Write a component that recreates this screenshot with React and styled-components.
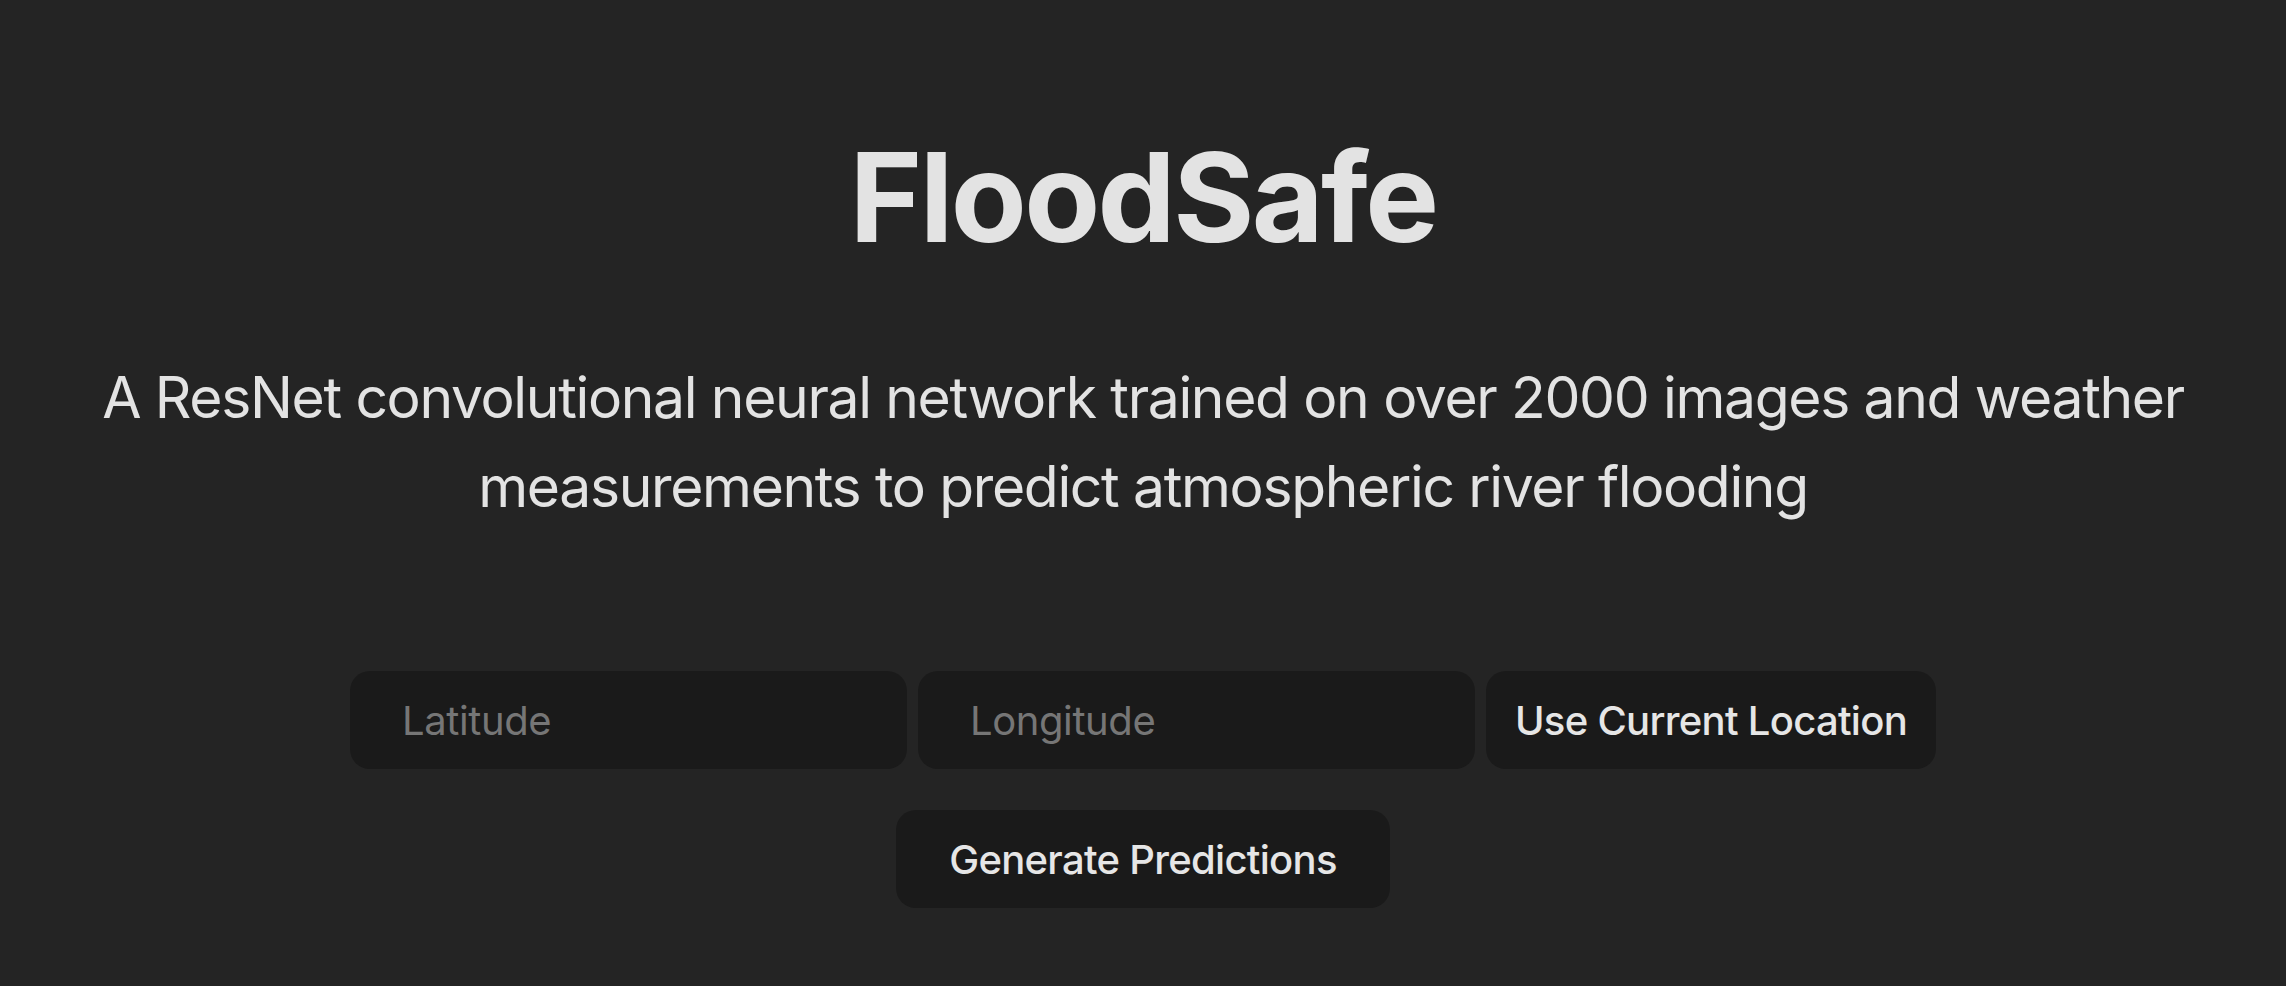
import React, { useState } from "react";
import styled, { createGlobalStyle } from "styled-components";

const GlobalStyle = createGlobalStyle`
  html, body {
    margin: 0;
    padding: 0;
    background: #242424;
  }
  body {
    font-family: Inter, "Noto Sans", "Liberation Sans", sans-serif;
    color: rgba(255, 255, 255, 0.87);
    -webkit-font-smoothing: antialiased;
  }
`;

const Page = styled.main`
  min-height: 100vh;
  box-sizing: border-box;
  display: flex;
  flex-direction: column;
  align-items: center;
  padding-top: 129px;
`;

const Title = styled.h1`
  margin: 0;
  font-size: 124px;
  font-weight: 700;
  line-height: 137px;
  letter-spacing: -2.6px;
  color: #e3e3e3;
`;

const Tagline = styled.p`
  margin: 87px 0 0;
  max-width: 2140px;
  font-size: 57px;
  font-weight: 400;
  line-height: 89px;
  letter-spacing: -1.35px;
  text-align: center;
  color: #e3e3e3;
`;

const Form = styled.form`
  margin-top: 140px;
  display: flex;
  flex-direction: column;
  align-items: center;
  gap: 41px;
`;

const Row = styled.div`
  display: flex;
  gap: 11px;
`;

const CoordInput = styled.input`
  box-sizing: border-box;
  width: 557px;
  height: 98px;
  padding: 0 52px;
  border: none;
  border-radius: 20px;
  background: #1a1a1a;
  color: #e3e3e3;
  font-family: inherit;
  font-size: 40px;
  letter-spacing: -0.4px;
  outline: none;

  &::placeholder {
    color: #767676;
  }
`;

const ActionButton = styled.button`
  box-sizing: border-box;
  height: 98px;
  padding: 0 ${({ $padX }) => $padX}px;
  border: 1px solid transparent;
  border-radius: 20px;
  background: #1a1a1a;
  color: #e6e6e6;
  font-family: inherit;
  font-size: 40px;
  font-weight: 500;
  letter-spacing: -0.7px;
  cursor: pointer;
`;

export default function App() {
  const [lat, setLat] = useState("");
  const [lng, setLng] = useState("");

  return (
    <>
      <GlobalStyle />
      <Page>
        <Title>FloodSafe</Title>
        <Tagline>
          A ResNet convolutional neural network trained on over 2000 images and
          weather measurements to predict atmospheric river flooding
        </Tagline>
        <Form onSubmit={(e) => e.preventDefault()}>
          <Row>
            <CoordInput
              placeholder="Latitude"
              value={lat}
              onChange={(e) => setLat(e.target.value)}
            />
            <CoordInput
              placeholder="Longitude"
              value={lng}
              onChange={(e) => setLng(e.target.value)}
            />
            <ActionButton type="button" $padX={28}>
              Use Current Location
            </ActionButton>
          </Row>
          <ActionButton type="submit" $padX={52}>
            Generate Predictions
          </ActionButton>
        </Form>
      </Page>
    </>
  );
}
